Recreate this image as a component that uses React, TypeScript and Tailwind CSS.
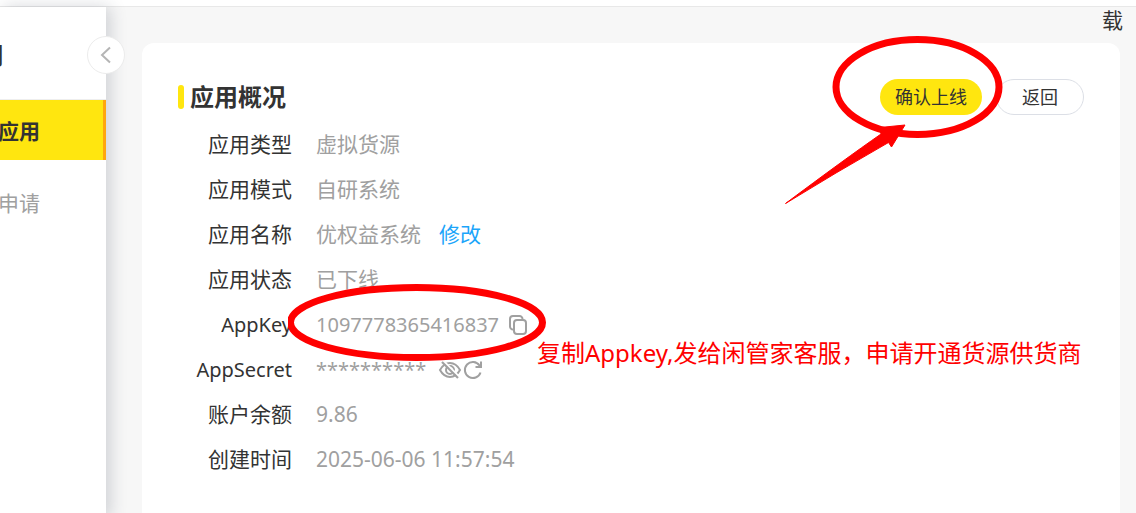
import type { ReactNode } from "react";

const rows = [
  { label: "应用类型", value: "虚拟货源" },
  { label: "应用模式", value: "自研系统" },
  { label: "应用名称", value: "优权益系统", extra: <EditLink /> },
  { label: "应用状态", value: "已下线" },
  { label: "AppKey", value: "1097778365416837", small: true, extra: <CopyKey /> },
  { label: "AppSecret", value: "**********", small: true, extra: <SecretActions /> },
  { label: "账户余额", value: "9.86" },
  { label: "创建时间", value: "2025-06-06 11:57:54" },
];

function EditLink() {
  return (
    <a href="#edit" className="ml-[18px] text-[#1ba5fa]">
      修改
    </a>
  );
}

function CopyKey() {
  return (
    <>
      <button type="button" aria-label="复制 AppKey" className="ml-2 text-[#a0a0a0]">
        <svg width="22" height="22" viewBox="0 0 22 22" fill="none" stroke="currentColor" strokeWidth="2">
          <rect x="7" y="6" width="12" height="14" rx="3" />
          <path d="M6.5 15.5H6A3 3 0 0 1 3 12.500V5A3 3 0 0 1 6 2H12.500A3 3 0 0 1 15.500 5V5.500" />
        </svg>
      </button>

      {/* red circle and note around the key */}
      <svg
        className="absolute -left-7 -top-7 z-10 pointer-events-none"
        width="260"
        height="80"
        viewBox="0 0 260 80"
        fill="none"
      >
        <ellipse cx="128.500" cy="39.500" rx="126" ry="35" stroke="#ff0000" strokeWidth="7" />
      </svg>
      <p className="absolute left-[221px] top-[26px] z-10 whitespace-nowrap text-2xl leading-8 text-[#ff0000]">
        复制Appkey,发给闲管家客服，申请开通货源供货商
      </p>
    </>
  );
}

function SecretActions() {
  return (
    <span className="ml-3 flex items-center text-[#a0a0a0]">
      <button type="button" aria-label="显示 AppSecret">
        <svg width="24" height="22" viewBox="0 0 24 22" fill="none" stroke="currentColor" strokeWidth="2">
          <path d="M2 11C4.500 6.500 8 4 12 4S19.500 6.500 22 11C19.500 15.500 16 18 12 18S4.500 15.500 2 11Z" />
          <circle cx="12" cy="11" r="4" />
          <path d="M5.500 2L21.500 18" stroke="#fff" strokeWidth="2" />
          <path d="M4 3L20 19" strokeWidth="2.200" />
        </svg>
      </button>
      <button type="button" aria-label="重置 AppSecret">
        <svg width="22" height="22" viewBox="0 0 22 22" fill="none" stroke="currentColor" strokeWidth="2">
          <path d="M18.500 13.500A8 8 0 1 1 17.500 6.500L18.500 8" />
          <path d="M19 2.500V8H13.500" />
        </svg>
      </button>
    </span>
  );
}

function Row({ label, small, value, extra }: { label: string; small?: boolean; value: string; extra?: ReactNode }) {
  return (
    <div
      className={
        small
          ? "flex h-[45px] items-center gap-6 text-xl"
          : "flex h-[45px] items-center gap-6 text-[21px]"
      }
    >
      <dt className="w-[114px] shrink-0 text-right text-[#333]">{label}</dt>
      <dd className="relative flex items-center whitespace-nowrap text-[#a0a0a0]">
        <span>{value}</span>
        {extra}
      </dd>
    </div>
  );
}

export default function App() {
  return (
    <div className="flex min-h-screen flex-col overflow-hidden bg-[#f7f7f7] font-['Noto_Sans','Noto_Sans_CJK_SC',sans-serif] text-[#333]">
      <header className="h-[7px] border-b border-[#e8e8e8] bg-white" />

      <div className="flex flex-1">
        {/* SIDEBAR */}
        <aside className="relative w-[106px] shrink-0 bg-white shadow-[4px_0_16px_rgba(40,50,70,0.2)]">
          <div className="flex h-[93px] items-center justify-end border-b border-[#eee] pr-[102px] pt-1 text-2xl font-bold">
            <span>用</span>
          </div>
          <nav className="flex flex-col gap-3.5 text-[21px]">
            <a
              href="#apps"
              className="flex h-[60px] items-center justify-end whitespace-nowrap border-r-3 border-[#ffa60d] bg-[#ffe60f] pr-[63px] pt-1 font-bold"
            >
              应用
            </a>
            <a
              href="#apply"
              className="flex h-[60px] items-center justify-end whitespace-nowrap pr-[66px] text-[#a0a0a0]"
            >
              申请
            </a>
          </nav>
          <button
            type="button"
            aria-label="收起菜单"
            className="absolute -right-[19px] top-[29px] flex size-[38px] items-center justify-center rounded-full border border-[#ececec] bg-white text-[#b5b5b5]"
          >
            <svg width="12" height="18" viewBox="0 0 12 18" fill="none" stroke="currentColor" strokeWidth="2">
              <path d="M10 1.500L2 9L10 16.500" />
            </svg>
          </button>
        </aside>

        {/* CONTENT */}
        <main className="flex min-w-0 flex-1 flex-col pl-9 pr-4">
          <div className="-mr-1 h-9 pr-px text-right text-[21px] leading-[26px]">载</div>

          <section className="flex-1 rounded-t-xl bg-white p-9">
            <div className="flex h-9 items-center justify-between">
              <h1 className="flex items-center gap-1.5 text-2xl font-bold">
                <span className="h-6 w-1.5 rounded-full bg-[#ffe60f]" />
                应用概况
              </h1>
              <div className="flex gap-3.5 text-lg">
                <div className="relative">
                  <button type="button" className="h-9 rounded-full bg-[#ffe60f] px-[15px]">
                    确认上线
                  </button>
                  <svg
                    className="absolute -left-[95px] -top-11 z-10 pointer-events-none"
                    width="220"
                    height="172"
                    viewBox="0 0 220 172"
                  >
                    <ellipse cx="132.500" cy="52" rx="81.500" ry="47.500" fill="none" stroke="#ff0000" strokeWidth="7" />
                    <path
                      d="M0.500 168.500Q60 124 96 99L95 92.500L120 90L106.500 112L103.500 107.500Q50 138 0.500 168.500Z"
                      fill="#ff0000"
                      stroke="#ff0000"
                    />
                  </svg>
                </div>
                <button type="button" className="h-9 rounded-full border border-[#dcdfe6] bg-white px-[25px]">
                  返回
                </button>
              </div>
            </div>

            <dl className="mt-[7px]">
              {rows.map((row) => (
                <Row key={row.label} {...row} />
              ))}
            </dl>
          </section>
        </main>
      </div>
    </div>
  );
}
